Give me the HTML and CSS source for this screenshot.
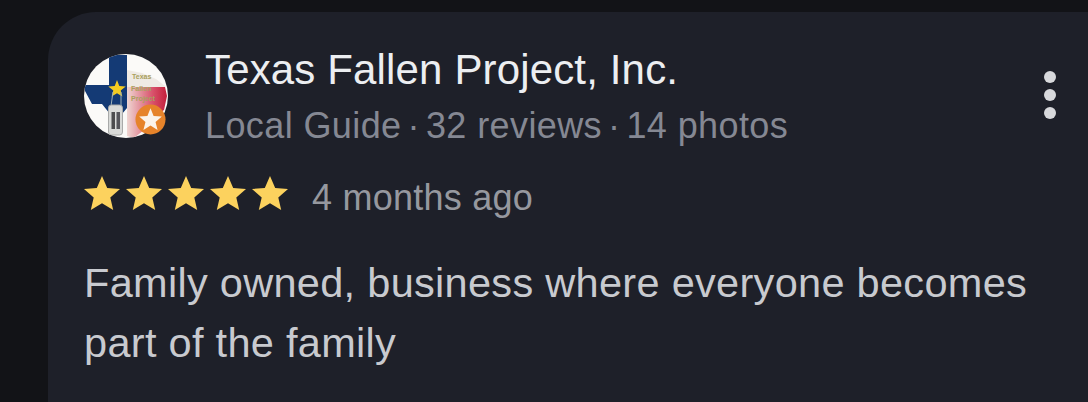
FILE: index.html
```html
<!DOCTYPE html>
<html lang="en">
<head>
<meta charset="utf-8">
<title>Review</title>
<link rel="stylesheet" href="styles.css">
</head>
<body>
<main class="card">
  <header class="head">
    <div class="avatar">
      <svg class="avatar-img" viewBox="0 0 84 84" aria-hidden="true">
        <defs>
          <clipPath id="disc"><circle cx="42" cy="42" r="42"/></clipPath>
          <linearGradient id="red" x1="0" x2="1" y1="0" y2="0">
            <stop offset="0" stop-color="#efd6d2"/>
            <stop offset="0.65" stop-color="#d8506a"/>
            <stop offset="1" stop-color="#c41f3b"/>
          </linearGradient>
        </defs>
        <g clip-path="url(#disc)">
          <rect width="84" height="84" fill="#fbfaf8"/>
          <path d="M43 16L58 19 72 25 81 32V34H43Z" fill="#efeae4"/>
          <path d="M43 33H81L83 42 80 56 66 66 60 76 50 84 43 82Z" fill="url(#red)"/>
          <path d="M25 1H43V54L38 60 34 68 26 60 18 50 8 50 1 37 0 31H25Z" fill="#143a75"/>
          <path d="M33 26l2.300 6 6.400.4-5 4 1.700 6.200-5.400-3.400-5.400 3.400 1.700-6.200-5-4 6.400-.4z" fill="#f4cc22"/>
          <path d="M29 38L27 52M37 38L37 52" stroke="#9fb0b8" fill="none"/>
          <rect x="24.500" y="51" width="14" height="30" rx="3" fill="#d9dad8" stroke="#a9aaa9"/>
          <rect x="27.500" y="58" width="3.500" height="17" fill="#4c4c4e"/>
          <rect x="32.500" y="58" width="3.500" height="17" fill="#55555a"/>
          <text class="mini" x="48" y="25">Texas</text>
          <text class="mini" x="47" y="37">Fallen</text>
          <text class="mini" x="47" y="47">Project</text>
        </g>
      </svg>
      <svg class="badge" viewBox="0 0 32 32" aria-hidden="true">
        <circle cx="16" cy="16" r="15.500" fill="#e6832a"/>
        <path d="M16 4.500l3.200 7.900 8.500.6-6.500 5.500 2.100 8.300-7.300-4.500-7.300 4.500 2.100-8.300L4.300 13l8.500-.6z" fill="#fbf3ea"/>
      </svg>
    </div>
    <div class="who">
      <h1 class="name">Texas Fallen Project, Inc.</h1>
      <p class="meta"><span>Local Guide</span><span class="dot">·</span><span>32 reviews</span><span class="dot">·</span><span>14 photos</span></p>
    </div>
    <svg class="more" viewBox="0 0 12 48" aria-label="More options">
      <circle cx="6" cy="6" r="6"/><circle cx="6" cy="24" r="6"/><circle cx="6" cy="42" r="6"/>
    </svg>
  </header>
  <div class="rating">
    <div class="stars" aria-label="5 stars">
      <svg class="star" viewBox="0 0 36 34"><path d="M18 0l5.200 11.900 12.800 1.100-9.700 8.500 2.900 12.500L18 27.300 6.800 34l2.900-12.500L0 13l12.800-1.100z"/></svg>
      <svg class="star" viewBox="0 0 36 34"><path d="M18 0l5.200 11.900 12.800 1.100-9.700 8.500 2.900 12.500L18 27.300 6.800 34l2.900-12.500L0 13l12.800-1.100z"/></svg>
      <svg class="star" viewBox="0 0 36 34"><path d="M18 0l5.200 11.900 12.800 1.100-9.700 8.500 2.900 12.500L18 27.300 6.800 34l2.900-12.500L0 13l12.800-1.100z"/></svg>
      <svg class="star" viewBox="0 0 36 34"><path d="M18 0l5.200 11.900 12.800 1.100-9.700 8.500 2.900 12.500L18 27.300 6.800 34l2.900-12.500L0 13l12.800-1.100z"/></svg>
      <svg class="star" viewBox="0 0 36 34"><path d="M18 0l5.200 11.900 12.800 1.100-9.700 8.500 2.900 12.500L18 27.300 6.800 34l2.900-12.500L0 13l12.800-1.100z"/></svg>
    </div>
    <span class="age">4 months ago</span>
  </div>
  <p class="body">Family owned, business where everyone becomes part of the family</p>
</main>
</body>
</html>
```
FILE: styles.css
```css
html, body {
  margin: 0;
  height: 402px;
  overflow: hidden;
  background: #121317;
}
body {
  padding: 12px 0 0 48px;
  box-sizing: border-box;
  font-family: "Liberation Sans", Arial, sans-serif;
}
.card {
  box-sizing: border-box;
  height: 390px;
  padding: 42px 0 0 36px;
  background: #1e2029;
  border-radius: 48px 0 0 0;
}
.head {
  display: flex;
  align-items: flex-start;
}
.avatar {
  position: relative;
  flex: none;
  width: 84px;
  height: 84px;
}
.avatar-img {
  display: block;
  width: 84px;
  height: 84px;
}
.mini {
  font-size: 7px;
  font-weight: 700;
  fill: #a9a05c;
}
.badge {
  position: absolute;
  right: 2px;
  bottom: 3px;
  width: 31px;
  height: 31px;
}
.who {
  flex: 1;
  margin: -8px 0 0 37px;
}
.name {
  margin: 0;
  font-size: 42px;
  line-height: 48px;
  font-weight: 400;
  letter-spacing: 0.15px;
  color: #eceef1;
}
.meta {
  display: flex;
  margin: 10px 0 0;
  font-size: 36px;
  line-height: 44px;
  letter-spacing: 0.4px;
  color: #858893;
}
.dot {
  margin: 0 6px;
}
.more {
  flex: none;
  width: 12px;
  height: 48px;
  margin: 17px 32px 0 0;
  fill: #d8d9dc;
}
.rating {
  display: flex;
  align-items: center;
  margin-top: 28px;
}
.stars {
  display: flex;
  gap: 6px;
  margin-bottom: 10px;
}
.star {
  display: block;
  width: 36px;
  height: 34px;
  fill: #fcd25e;
}
.age {
  margin-left: 24px;
  font-size: 36px;
  line-height: 44px;
  letter-spacing: 0.25px;
  color: #96989f;
}
.body {
  margin: 33px 0 0;
  width: 960px;
  font-size: 41.500px;
  line-height: 60px;
  letter-spacing: 0.3px;
  color: #c8cacf;
}
```
